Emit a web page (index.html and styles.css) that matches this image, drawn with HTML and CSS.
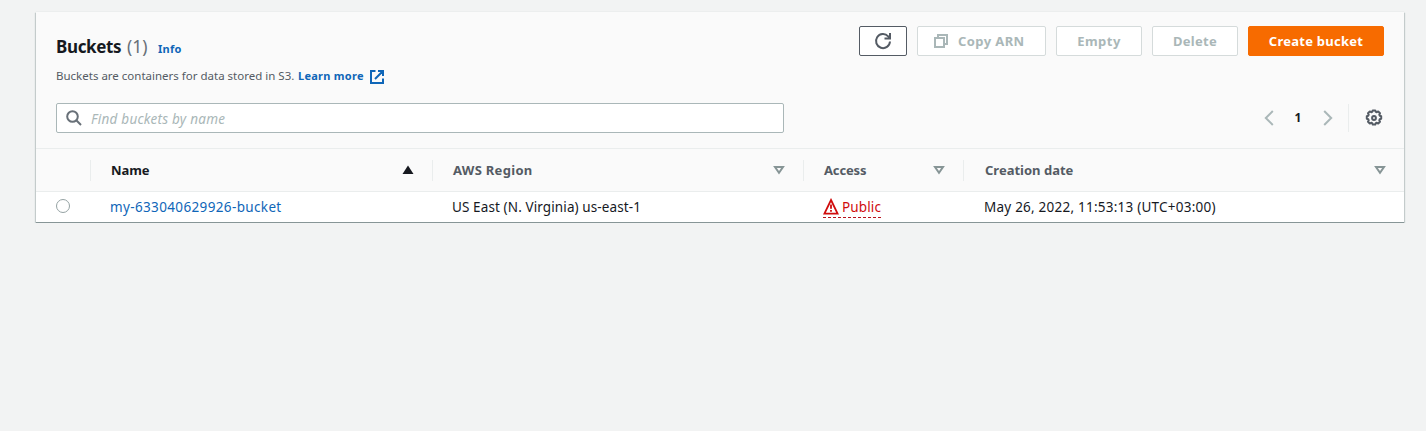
FILE: index.html
```html
<!DOCTYPE html>
<html lang="en">
<head>
<meta charset="utf-8">
<title>Buckets</title>
<link rel="stylesheet" href="styles.css">
</head>
<body>
<main class="card">
  <header class="card-head">
    <div class="top">
      <div class="intro">
        <h2 class="heading"><span class="title">Buckets</span><span class="count">(1)</span><a class="info">Info</a></h2>
        <p class="desc"><span class="desc-text">Buckets are containers for data stored in S3.</span><a class="learn">Learn more</a><svg class="ext" width="14" height="14" viewBox="0 0 14 14" fill="none" stroke="currentColor" stroke-width="2"><path d="M5.500 1H1v12h12V8.500M8 1h5v5M13 1 5 9"/></svg></p>
      </div>
      <div class="actions">
        <button class="btn refresh" aria-label="Refresh"><svg width="18" height="18" viewBox="0 0 18 18" fill="none" stroke="currentColor" stroke-width="2"><path d="M16 9.500A7 7 0 1 1 14.200 4.400l1.300 1.600"/><path d="M16 1v5.500h-5.500"/></svg></button>
        <button class="btn disabled copy"><svg width="14" height="14" viewBox="0 0 14 14" fill="none" stroke="currentColor" stroke-width="2"><path d="M1 4h9v9H1zM4 4V1h9v9h-3"/></svg><span>Copy ARN</span></button>
        <button class="btn disabled empty"><span>Empty</span></button>
        <button class="btn disabled delete"><span>Delete</span></button>
        <button class="btn primary"><span>Create bucket</span></button>
      </div>
    </div>
    <div class="tools">
      <div class="search">
        <svg width="16" height="16" viewBox="0 0 16 16" fill="none" stroke="currentColor" stroke-width="2"><circle cx="6.500" cy="6.500" r="5.300"/><path d="m10.300 10.300 4.700 4.700"/></svg>
        <span class="placeholder">Find buckets by name</span>
      </div>
      <div class="pager">
        <svg class="chev" width="10" height="16" viewBox="0 0 10 16" fill="none" stroke="currentColor" stroke-width="2"><path d="M8.800 1 1.800 8l7 7"/></svg>
        <span class="page">1</span>
        <svg class="chev" width="10" height="16" viewBox="0 0 10 16" fill="none" stroke="currentColor" stroke-width="2"><path d="m1.200 1 7 7-7 7"/></svg>
        <span class="rule"></span>
        <svg class="gear" width="18" height="18" viewBox="0 0 18 18" fill="none" stroke="currentColor" stroke-width="2"><path stroke-linejoin="round" d="M7.200 2.800 7.700 1.400h2.600l.5 1.400 1 .4 1.400-.7 1.800 1.800-.7 1.400.4 1 1.500.5v2.600l-1.500.5-.4 1 .7 1.400-1.800 1.800-1.400-.7-1 .4-.5 1.400H7.700l-.5-1.400-1-.4-1.400.7L3 12.700l.7-1.400-.4-1-1.500-.5V7.200l1.500-.5.4-1L3 4.300l1.800-1.800 1.400.7z"/><circle cx="9" cy="9" r="1.900"/></svg>
      </div>
    </div>
  </header>
  <div class="grid thead">
    <div></div>
    <div class="th sorted"><span class="h-name">Name</span><svg width="12" height="10" viewBox="0 0 12 10"><path d="M6 .5 11.500 9H.5z" fill="currentColor"/></svg></div>
    <div class="th"><span class="h-region">AWS Region</span><svg width="12" height="10" viewBox="0 0 12 10" fill="none" stroke="currentColor" stroke-width="2"><path d="M2 2h8L6 7.800z"/></svg></div>
    <div class="th"><span class="h-access">Access</span><svg width="12" height="10" viewBox="0 0 12 10" fill="none" stroke="currentColor" stroke-width="2"><path d="M2 2h8L6 7.800z"/></svg></div>
    <div class="th date-head"><span class="h-date">Creation date</span><svg width="12" height="10" viewBox="0 0 12 10" fill="none" stroke="currentColor" stroke-width="2"><path d="M2 2h8L6 7.800z"/></svg></div>
  </div>
  <div class="grid row">
    <div class="pick"><span class="radio"></span></div>
    <div class="td"><a class="bucket">my-633040629926-bucket</a></div>
    <div class="td"><span class="region">US East (N. Virginia) us-east-1</span></div>
    <div class="td"><span class="public"><svg width="16" height="17" viewBox="0 0 16 17" fill="none" stroke="currentColor" stroke-width="1.800"><path d="M8 2 14.600 15.600H1.400z"/><path d="M8 6.500v4.200M8 12v1.800"/></svg><span class="public-text">Public</span></span></div>
    <div class="td date-cell"><span class="date">May 26, 2022, 11:53:13 (UTC+03:00)</span></div>
  </div>
</main>
</body>
</html>
```
FILE: styles.css
```css
* { box-sizing: border-box; }
body {
  margin: 0;
  padding: 12px 22px 0 36px;
  background: #f2f3f3;
  color: #16191f;
  font: 13px/20px "Noto Sans", "Open Sans", sans-serif;
}
svg { display: block; flex: none; }
span, a { white-space: nowrap; }
.card {
  height: 211px;
  background: #fff;
  border-bottom: 1px solid #879596;
  box-shadow: 0 0 1px #cdd3d3, 0 1px 1px #b5bebe, 1px 1px 1px #c5cccc, -1px 1px 1px #c5cccc;
}
.card-head { height: 137px; padding: 14px 20px 0; background: #fafafa; border-bottom: 1px solid #eaeded; }
.top { display: flex; justify-content: space-between; height: 77px; }
.heading { display: flex; align-items: baseline; margin: 0; padding-top: 8px; font-size: 17px; line-height: 24px; }
.title { width: 71px; letter-spacing: -.35px; }
.count { width: 31px; color: #687078; font-weight: 400; font-size: 17.500px; }
.info { color: #0f66b8; font-size: 11px; letter-spacing: .3px; }
.desc { display: flex; align-items: center; margin: 6px 0 0; color: #545b64; font-size: 11.500px; line-height: 18px; }
.desc-text { width: 242px; }
.learn { width: 72px; color: #0f66b8; font-weight: 700; font-size: 11px; letter-spacing: .27px; }
.ext { color: #0f66b8; margin-top: 1px; }
.actions { display: flex; gap: 10px; }
.btn {
  display: flex; align-items: center; justify-content: center;
  height: 30px; padding: 0; border: 1px solid #545b64; border-radius: 2px;
  background: #fff; color: #545b64;
  font: 700 13px/20px "Noto Sans", "Open Sans", sans-serif; letter-spacing: .25px;
}
.refresh { width: 48px; }
.disabled { border-color: #d5dbdb; color: #aab7b8; }
.copy { width: 129px; gap: 10px; justify-content: flex-start; padding-left: 16px; letter-spacing: .4px; }
.empty { width: 86px; letter-spacing: .5px; }
.delete { width: 86px; }
.primary { width: 136px; border-color: #f76b00; background: #f76b00; color: #fff; }
.tools { display: flex; justify-content: space-between; }
.search {
  display: flex; align-items: center; gap: 9px;
  width: 728px; height: 30px; padding-left: 9px;
  border: 1px solid #aab7b8; border-radius: 2px; background: #fff; color: #687078;
}
.placeholder { color: #aab7b8; font-size: 13.500px; font-style: italic; padding-top: 2px; letter-spacing: .25px; }
.pager { display: flex; align-items: center; height: 30px; }
.chev { color: #aab7b8; }
.page { width: 49px; text-align: center; font-weight: 700; font-size: 12px; }
.rule { width: 1px; height: 28px; margin: 0 16px 0 15.500px; background: #eaeded; }
.gear { color: #545b64; margin-right: 1px; }
.grid { display: grid; grid-template-columns: 54px 342px 371px 160px 1fr; }
.thead { height: 43px; align-items: center; background: #fafafa; border-bottom: 1px solid #eaeded; color: #545b64; font-weight: 700; }
.th {
  display: flex; align-items: center; justify-content: space-between;
  height: 21px; padding: 0 18px 0 20px; border-left: 1px solid #eaeded;
}
.th svg { color: #879596; }
.sorted, .sorted svg { color: #16191f; }
.h-name { letter-spacing: -.1px; }
.h-region { letter-spacing: .3px; }
.h-access { letter-spacing: -.15px; }
.date-head { padding-left: 21px; }
.row { height: 30px; align-items: center; }
.pick { padding-left: 20px; }
.radio { display: block; width: 14px; height: 14px; margin-top: -2px; border: 1px solid #95a2a3; border-radius: 50%; }
.td { padding-left: 20px; font-size: 13.500px; }
.bucket { color: #0f66b8; letter-spacing: .36px; }
.region { letter-spacing: .11px; }
.date { letter-spacing: .23px; }
.date-cell { padding-left: 21px; }
.public { display: inline-flex; align-items: center; gap: 3px; height: 21px; margin-top: 3px; border-bottom: 1px dashed #b8141c; color: #d00c0c; }
.public-text { letter-spacing: .13px; }
```
